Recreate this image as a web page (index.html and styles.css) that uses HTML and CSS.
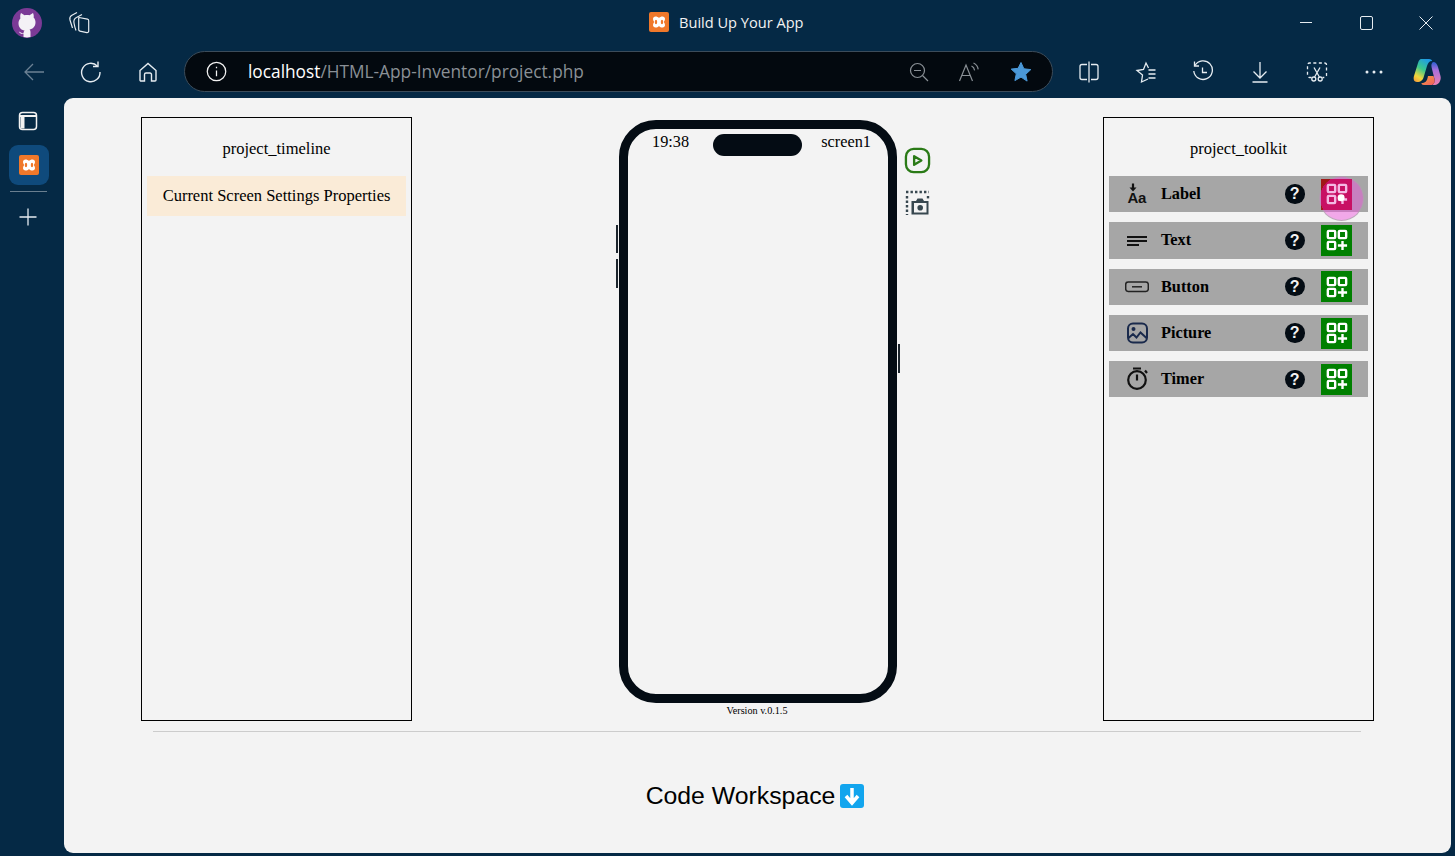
FILE: index.html
```html
<!DOCTYPE html>
<html lang="en">

<head>
    <meta charset="UTF-8" />
    <title>Build Up Your App</title>
    <link rel="stylesheet" href="styles.css">
</head>

<body>
    <header class="titlebar">
        <div class="title-left">
            <svg class="profile" viewBox="0 0 32 32" width="32" height="32">
                <circle cx="16" cy="16" r="15" fill="#7b3a96" />
                <path d="M10 6l3.5 2.2c1.6-.4 3.400-.4 5 0L22 6c.8 1.800.9 3.300.6 4.500 1.300 1.400 1.900 3 1.900 4.800 0 4.500-2.700 6.700-6 7.200.8.700 1 1.600 1 2.800V30a15 15 0 0 1-7 0v-3.200c-2.500.5-3.800-.6-4.700-2.300 1 .2 2 1 3 1.500.6.300 1.200.2 1.700 0 0-1 .3-1.800 1-2.500-3.300-.5-6-2.700-6-7.200 0-1.800.6-3.400 1.900-4.800C9.100 9.300 9.200 7.800 10 6z" fill="#f4f1f6" />
            </svg>
            <svg class="tool-icon" viewBox="0 0 24 24" width="24" height="24" fill="none" stroke="#e6ecf1" stroke-width="1.200">
                <path d="M12 6.500l8.500 1.700a1.500 1.500 0 0 1 1.200 1.500v10.500a1.500 1.500 0 0 1-1.800 1.400l-7-1.500a1.500 1.500 0 0 1-1.200-1.500V8a1.500 1.500 0 0 1 .3-1.500z" />
                <path d="M9 19.500C8 17 7.500 15 7 12c-.5-2.500.5-4.500 2.500-5.500L15 3.500" />
                <path d="M5.500 17L3 9c-.5-2 0-3.500 1.500-4.500L10 1.500" />
            </svg>
        </div>
        <div class="window-title">
            <svg class="xampp" viewBox="0 0 20 20" width="20" height="20">
                <rect width="20" height="20" rx="2" fill="#f0782a" />
                <path d="M4 7c0-1.500 1-2.500 2.500-2.500 1.500 0 2.500.5 3.500 1.500 1-1 2-1.500 3.500-1.500C15 4.500 16 5.500 16 7c0 1-.5 2-1.200 3 .7 1 1.200 2 1.200 3 0 1.500-1 2.500-2.500 2.500-1.500 0-2.500-.5-3.500-1.500-1 1-2 1.500-3.500 1.500C5 15.500 4 14.500 4 13c0-1 .5-2 1.200-3C4.500 9 4 8 4 7z" fill="#fff" />
                <ellipse cx="7" cy="10" rx="1.200" ry="2.300" fill="#f0782a" />
                <ellipse cx="13" cy="10" rx="1.200" ry="2.300" fill="#f0782a" />
            </svg>
            <span>Build Up Your App</span>
        </div>
        <div class="window-buttons">
            <svg viewBox="0 0 16 16" width="16" height="16" stroke="#e6ecf1" fill="none"><path d="M2 7.500h12" /></svg>
            <svg viewBox="0 0 16 16" width="16" height="16" stroke="#e6ecf1" fill="none"><rect x="2.500" y="1.500" width="12" height="13" rx="1.500" /></svg>
            <svg viewBox="0 0 16 16" width="16" height="16" stroke="#e6ecf1" fill="none"><path d="M1.500 1.500l13 13M14.500 1.500l-13 13" /></svg>
        </div>
    </header>

    <nav class="toolbar">
        <div class="nav-icons">
            <svg viewBox="0 0 24 24" width="24" height="24" fill="none" stroke="#6c8194" stroke-width="1.300"><path d="M22 12H3M11 4l-8 8 8 8" /></svg>
            <svg viewBox="0 0 24 24" width="24" height="24" fill="none" stroke="#e6ecf1" stroke-width="1.400"><path d="M18.500 6.200A9.200 9.200 0 1 0 21 12" /><path d="M19 1.500v5h-5" /></svg>
            <svg viewBox="0 0 24 24" width="24" height="24" fill="none" stroke="#e6ecf1" stroke-width="1.400"><path d="M4 10.500L12 3.500l8 7V20a1 1 0 0 1-1 1h-3.500v-6.500a1.500 1.500 0 0 0-1.500-1.500h-4a1.500 1.500 0 0 0-1.500 1.500V21H5a1 1 0 0 1-1-1z" /></svg>
        </div>
        <div class="address-bar">
            <svg class="info" viewBox="0 0 20 20" width="21" height="21" fill="none" stroke="#f2f2f2" stroke-width="1.200"><circle cx="10" cy="10" r="8.800" /><path d="M10 9v5.500M10 5.500v1.400" /></svg>
            <div class="url"><span class="host">localhost</span>/HTML-App-Inventor/project.php</div>
            <div class="address-actions">
                <svg viewBox="0 0 20 20" width="20" height="20" fill="none" stroke="#8a9096" stroke-width="1.200"><circle cx="8.500" cy="8.500" r="7" /><path d="M5 8.500h7M13.500 13.500l5.500 5.500" /></svg>
                <svg viewBox="0 0 22 20" width="22" height="20" fill="none" stroke="#8a9096" stroke-width="1.200"><path d="M1.500 19L8 3l6.500 16M4 13.500h8" /><path d="M13.500 4c1.800.8 2.800 2.300 3.100 4.300M15.500 1c2.800 1.200 4.300 3.400 4.700 6.400" /></svg>
                <svg viewBox="0 0 24 24" width="24" height="24"><path d="M12 2.500l2.900 6.300 6.900.8-5.100 4.700 1.400 6.800L12 17.100 5.900 20.600l1.400-6.800-5.100-4.700 6.900-.8z" fill="#4a98d8" stroke="#4a98d8" stroke-linejoin="round" /></svg>
            </div>
        </div>
        <div class="browser-icons">
            <svg viewBox="0 0 24 24" width="24" height="24" fill="none" stroke="#e6ecf1" stroke-width="1.300"><path d="M10 4.500H5a2 2 0 0 0-2 2v11a2 2 0 0 0 2 2h5M14 4.500h5a2 2 0 0 1 2 2v11a2 2 0 0 1-2 2h-5M12 1.500v21" /></svg>
            <svg viewBox="0 0 24 24" width="24" height="24" fill="none" stroke="#e6ecf1" stroke-width="1.300"><path d="M14 19l-6.500 3 1-7L3 10.500 9.500 9.500 12 3l2.500 5" /><path d="M14.500 10h7M14.500 14h7M14.500 18h7" /></svg>
            <svg class="history" viewBox="0 0 24 24" width="24" height="24" fill="none" stroke="#e6ecf1" stroke-width="1.300"><path d="M4 5.500A9.300 9.300 0 1 1 2.800 11" /><path d="M3.500 1.500v4.500h4.500M11.500 7.500v5h4.500" /></svg>
            <svg viewBox="0 0 24 24" width="24" height="24" fill="none" stroke="#e6ecf1" stroke-width="1.300"><path d="M12 2v16M5.500 11.500L12 18l6.500-6.500M4.500 22h15" /></svg>
            <svg viewBox="0 0 24 24" width="24" height="24" fill="none" stroke="#e6ecf1" stroke-width="1.300"><path d="M6.500 17.500H4.500a2 2 0 0 1-2-2V5a2 2 0 0 1 2-2h15a2 2 0 0 1 2 2v10.500a2 2 0 0 1-2 2h-2" stroke-dasharray="3 2.500" /><path d="M9 7.500l5.400 9.500M15 7.500l-5.400 9.500" /><circle cx="8.800" cy="19" r="2" /><circle cx="15.200" cy="19" r="2" /></svg>
            <svg viewBox="0 0 24 24" width="24" height="24" fill="#e6ecf1"><circle cx="5" cy="12" r="1.500" /><circle cx="12" cy="12" r="1.500" /><circle cx="19" cy="12" r="1.500" /></svg>
            <svg class="copilot" viewBox="0 0 28 28" width="28" height="28">
                <defs>
                    <linearGradient id="cop-a" x1="0.700" y1="0" x2="0.200" y2="1"><stop offset="0" stop-color="#1f9be6" /><stop offset="0.450" stop-color="#3cc98c" /><stop offset="0.800" stop-color="#f3d63c" /><stop offset="1" stop-color="#f5a63a" /></linearGradient>
                    <linearGradient id="cop-b" x1="0.500" y1="0" x2="0.500" y2="1"><stop offset="0" stop-color="#2b5fd0" /><stop offset="0.350" stop-color="#a96fdc" /><stop offset="1" stop-color="#ee7fb0" /></linearGradient>
                    <linearGradient id="cop-c" x1="0" y1="0" x2="1" y2="1"><stop offset="0" stop-color="#f7a33c" /><stop offset="1" stop-color="#ee5a62" /></linearGradient>
                </defs>
                <path d="M8 1h8c2 0 3 1 3 2-3 0-4 2-5 5l-3 10c-1 4-3 6-7 6-3 0-4-3-3-6L5 5c1-3 2-4 3-4z" fill="url(#cop-a)" />
                <path d="M20 4c3 0 4 2 5 5l2.500 9c1 4-1.500 9-5.500 9h-4c3 0 4-3 3.500-6L19 11c-.5-2-1.500-5 1-7z" fill="url(#cop-b)" />
                <path d="M15 18h5.500l1 3.500c.7 3-1 5.500-3.500 5.500h-7c-2 0-2.500-1-2.500-2 3.500 0 5.500-1 6.500-7z" fill="url(#cop-c)" />
            </svg>
        </div>
    </nav>

    <div class="browser-body">
        <aside class="sidebar">
            <svg class="side-icon" viewBox="0 0 20 20" width="20" height="20" fill="none" stroke="#f2f2f2" stroke-width="1.500"><rect x="1.500" y="1.500" width="17" height="17" rx="3" /><path d="M2 5h16" stroke-width="2" /><path d="M2.500 5.500h4v12h-4z" fill="#f2f2f2" stroke="none" /></svg>
            <div class="active-tab">
                <svg viewBox="0 0 20 20" width="20" height="20">
                    <rect width="20" height="20" rx="2" fill="#f0782a" />
                    <path d="M4 7c0-1.500 1-2.500 2.500-2.500 1.500 0 2.500.5 3.500 1.500 1-1 2-1.500 3.500-1.500C15 4.500 16 5.500 16 7c0 1-.5 2-1.200 3 .7 1 1.200 2 1.200 3 0 1.500-1 2.500-2.500 2.500-1.500 0-2.500-.5-3.500-1.500-1 1-2 1.500-3.500 1.500C5 15.500 4 14.500 4 13c0-1 .5-2 1.200-3C4.500 9 4 8 4 7z" fill="#fff" />
                    <ellipse cx="7" cy="10" rx="1.200" ry="2.300" fill="#f0782a" />
                    <ellipse cx="13" cy="10" rx="1.200" ry="2.300" fill="#f0782a" />
                </svg>
            </div>
            <div class="side-rule"></div>
            <svg class="side-icon" viewBox="0 0 20 20" width="20" height="20" fill="none" stroke="#e6ecf1" stroke-width="1.300"><path d="M10 1.500v17M1.500 10h17" /></svg>
        </aside>

        <main class="page">
            <div class="workspace">
                <section class="panel">
                    <h2 class="panel-title">project_timeline</h2>
                    <div class="timeline-item">Current Screen Settings Properties</div>
                </section>

                <section class="phone-col">
                    <div class="phone-wrap">
                        <div class="phone">
                            <div class="status-bar">
                                <span>19:38</span>
                                <span>screen1</span>
                            </div>
                            <div class="notch"></div>
                            <i class="side-btn vol-up"></i>
                            <i class="side-btn vol-down"></i>
                            <i class="side-btn power"></i>
                        </div>
                        <div class="phone-tools">
                            <svg viewBox="0 0 28 28" width="27" height="27" fill="none" stroke="#2a7a16" stroke-width="2.400"><rect x="2" y="2" width="24" height="24" rx="8" /><path d="M10.500 9.500l7.500 4.500-7.500 4.500z" stroke-linejoin="round" /></svg>
                            <svg viewBox="0 0 26 26" width="26" height="26" fill="none" stroke="#37474f" stroke-width="2.400"><path d="M2 2H25" stroke-dasharray="2.400 2.100" /><path d="M3 6V25" stroke-dasharray="2.400 2.100" /><path d="M24 6v2.400" /><path d="M7.500 11H12l1.500-2.500h5L20 11h4.500v13.500H7.500z" fill="#37474f" stroke="none" /><rect x="10" y="13" width="12.500" height="9.500" fill="#f3f3f3" stroke="none" /><circle cx="16.200" cy="17.700" r="2.800" fill="#37474f" stroke="none" /></svg>
                        </div>
                    </div>
                    <div class="version">Version v.0.1.5</div>
                </section>

                <section class="panel">
                    <h2 class="panel-title">project_toolkit</h2>
                    <div class="tool-row">
                        <svg class="kit-icon" viewBox="0 0 24 24" width="24" height="24"><path d="M8 1.500v5" fill="none" stroke="#111" stroke-width="2.200" /><path d="M4.500 5.500h7L8 9.500z" fill="#111" /><text x="2.500" y="21" class="kit-big">A</text><text x="13" y="21" class="kit-small">a</text></svg>
                        <span class="tool-name">Label</span>
                        <span class="help">?</span>
                        <div class="add-wrap">
                            <i class="click-ring"></i>
                            <span class="add-btn add-hover"><svg viewBox="0 0 24 24" width="22" height="22" fill="none" stroke="#f4b8e4" stroke-width="2.600"><rect x="2" y="2" width="8" height="8" rx="1" /><rect x="14" y="2" width="8" height="8" rx="1" /><rect x="2" y="14" width="8" height="8" rx="1" /><path d="M18 13v10M13 18h10" /><circle cx="16.500" cy="16" r="3.800" fill="#fff" stroke="none" /></svg></span>
                        </div>
                    </div>
                    <div class="tool-row">
                        <svg class="kit-icon" viewBox="0 0 24 24" width="24" height="24" fill="none" stroke="#111" stroke-width="2.200"><path d="M2 9h20M2 13h20M2 17h12" /></svg>
                        <span class="tool-name">Text</span>
                        <span class="help">?</span>
                        <div class="add-wrap">
                            <span class="add-btn"><svg viewBox="0 0 24 24" width="22" height="22" fill="none" stroke="#fff" stroke-width="2.600"><rect x="2" y="2" width="8" height="8" rx="1" /><rect x="14" y="2" width="8" height="8" rx="1" /><rect x="2" y="14" width="8" height="8" rx="1" /><path d="M18 13v10M13 18h10" /></svg></span>
                        </div>
                    </div>
                    <div class="tool-row">
                        <svg class="kit-icon" viewBox="0 0 24 24" width="24" height="24" fill="none" stroke="#222" stroke-width="1.500"><rect x="0.700" y="7" width="22.600" height="9.500" rx="2.500" /><path d="M7 11.800h10" /></svg>
                        <span class="tool-name">Button</span>
                        <span class="help">?</span>
                        <div class="add-wrap">
                            <span class="add-btn"><svg viewBox="0 0 24 24" width="22" height="22" fill="none" stroke="#fff" stroke-width="2.600"><rect x="2" y="2" width="8" height="8" rx="1" /><rect x="14" y="2" width="8" height="8" rx="1" /><rect x="2" y="14" width="8" height="8" rx="1" /><path d="M18 13v10M13 18h10" /></svg></span>
                        </div>
                    </div>
                    <div class="tool-row">
                        <svg class="kit-icon" viewBox="0 0 24 24" width="24" height="24" fill="none" stroke="#1a2a4c" stroke-width="2"><rect x="3" y="2.500" width="19" height="19" rx="5" /><circle cx="8.500" cy="8" r="1" fill="#1a2a4c" /><path d="M3.500 17l4.500-4 3.500 3.500 4-5 6 5.500" /></svg>
                        <span class="tool-name">Picture</span>
                        <span class="help">?</span>
                        <div class="add-wrap">
                            <span class="add-btn"><svg viewBox="0 0 24 24" width="22" height="22" fill="none" stroke="#fff" stroke-width="2.600"><rect x="2" y="2" width="8" height="8" rx="1" /><rect x="14" y="2" width="8" height="8" rx="1" /><rect x="2" y="14" width="8" height="8" rx="1" /><path d="M18 13v10M13 18h10" /></svg></span>
                        </div>
                    </div>
                    <div class="tool-row">
                        <svg class="kit-icon" viewBox="0 0 24 24" width="24" height="24" fill="none" stroke="#111" stroke-width="2.200"><circle cx="12" cy="13" r="8.800" /><path d="M8 1.500h8M12 7.500v6M20 3.500l2 2.500" /></svg>
                        <span class="tool-name">Timer</span>
                        <span class="help">?</span>
                        <div class="add-wrap">
                            <span class="add-btn"><svg viewBox="0 0 24 24" width="22" height="22" fill="none" stroke="#fff" stroke-width="2.600"><rect x="2" y="2" width="8" height="8" rx="1" /><rect x="14" y="2" width="8" height="8" rx="1" /><rect x="2" y="14" width="8" height="8" rx="1" /><path d="M18 13v10M13 18h10" /></svg></span>
                        </div>
                    </div>
                </section>
            </div>

            <hr class="divider" />

            <h1 class="code-title">Code Workspace<span class="down-emoji"><svg viewBox="0 0 24 24" width="24" height="24"><rect width="24" height="24" rx="3" fill="#12a5ee" /><path d="M12 4v14M6 12l6 7 6-7" fill="none" stroke="#fff" stroke-width="3.500" /></svg></span></h1>
        </main>
    </div>
</body>

</html>
```

FILE: styles.css
```css
* {
    box-sizing: border-box;
}

html,
body {
    height: 100%;
}

body {
    margin: 0;
    background: #052945;
    overflow: hidden;
    display: flex;
    flex-direction: column;
    font-family: "Liberation Serif", serif;
    color: #000;
}

svg {
    display: block;
    flex: none;
}

/* browser frame */

.titlebar {
    height: 45px;
    display: flex;
    align-items: center;
    justify-content: space-between;
    position: relative;
}

.title-left {
    display: flex;
    align-items: center;
    gap: 24px;
    padding-left: 11px;
}

.window-title {
    position: absolute;
    left: 649px;
    top: 12px;
    display: flex;
    align-items: center;
    gap: 10px;
    color: #f2f2f2;
    font-family: "Open Sans", sans-serif;
    font-size: 14.600px;
}

.window-buttons {
    display: flex;
    gap: 44px;
    padding-right: 21px;
}

.toolbar {
    height: 53px;
    display: flex;
    align-items: center;
}

.nav-icons {
    display: flex;
    gap: 33px;
    padding-left: 22px;
    width: 184px;
}

.address-bar {
    width: 869px;
    height: 41px;
    border: 1px solid #3c4c5a;
    border-radius: 21px;
    background: #03090f;
    display: flex;
    align-items: center;
    padding: 0 19px 0 21px;
}

.url {
    margin-left: 21px;
    flex: 1;
    color: #8a9096;
    font-family: "Open Sans", sans-serif;
    font-size: 17.300px;
}

.host {
    color: #fff;
}

.address-actions {
    display: flex;
    align-items: center;
    gap: 29px;
}

.browser-icons {
    display: flex;
    align-items: center;
    gap: 33px;
    padding-left: 24px;
}

.copilot {
    margin-left: -6px;
}

.browser-body {
    flex: 1;
    display: flex;
    padding: 0 4px 3px 0;
    min-height: 0;
}

.sidebar {
    width: 64px;
    flex: none;
    display: flex;
    flex-direction: column;
    align-items: center;
    padding-top: 13px;
    padding-right: 7px;
}

.side-icon {
    margin-left: -2px;
}

.active-tab {
    width: 40px;
    height: 40px;
    margin-top: 14px;
    border-radius: 9px;
    background: #0f4a7c;
    display: flex;
    align-items: center;
    justify-content: center;
}

.side-rule {
    width: 37px;
    height: 1px;
    background: #6a7f90;
    margin: 6px 0 15px;
}

/* page */

.page {
    flex: 1;
    background: #f3f3f3;
    border-radius: 9px;
    padding: 19px 77px 0;
    min-width: 0;
}

.workspace {
    display: flex;
    justify-content: space-between;
    height: 604px;
}

.panel {
    width: 271px;
    height: 604px;
    border: 1px solid #000;
    padding: 0 5px;
}

.panel-title {
    margin: 0;
    padding-top: 21px;
    height: 58px;
    font-size: 16.500px;
    font-weight: 400;
    line-height: 20px;
    text-align: center;
}

.timeline-item {
    height: 40px;
    background: #faebd7;
    font-size: 16.500px;
    line-height: 40px;
    text-align: center;
}

.phone-col {
    width: 278px;
    margin-left: 207px;
    margin-right: 206px;
    padding-top: 3px;
    flex: none;
}

.phone-wrap {
    position: relative;
}

.phone {
    position: relative;
    width: 278px;
    height: 583px;
    border: 9px solid #040c14;
    border-radius: 37px;
}

.status-bar {
    display: flex;
    justify-content: space-between;
    padding: 4px 17px 0 24px;
    font-size: 16.300px;
    line-height: 18px;
}

.notch {
    position: absolute;
    top: 5px;
    left: 85px;
    width: 89px;
    height: 22px;
    border-radius: 11px;
    background: #040c14;
}

.side-btn {
    position: absolute;
    width: 2px;
    background: #1c252d;
}

.vol-up {
    left: -12px;
    top: 96px;
    height: 28px;
}

.vol-down {
    left: -12px;
    top: 130px;
    height: 29px;
}

.power {
    right: -12px;
    top: 215px;
    height: 29px;
}

.phone-tools {
    position: absolute;
    left: 285px;
    top: 27px;
    display: flex;
    flex-direction: column;
    gap: 16px;
}

.version {
    padding-right: 2px;
    text-align: center;
    font-size: 10.200px;
    line-height: 14px;
    margin-top: 1px;
}

/* toolkit rows */

.tool-row {
    height: 36.300px;
    margin-bottom: 10px;
    background: #a6a6a6;
    display: flex;
    align-items: center;
    padding-left: 16px;
}

.kit-icon {
    width: 24px;
    height: 24px;
}

.kit-big,
.kit-small {
    font-family: "Liberation Sans", sans-serif;
    font-weight: 700;
    fill: #111;
}

.kit-big {
    font-size: 15px;
}

.kit-small {
    font-size: 15px;
}

.tool-name {
    margin-left: 12px;
    width: 124px;
    font-size: 16.300px;
    font-weight: 700;
}

.help {
    width: 19.500px;
    height: 19.500px;
    border-radius: 50%;
    background: #040c14;
    color: #f3f3f3;
    font-family: "Liberation Sans", sans-serif;
    font-size: 16px;
    font-weight: 700;
    line-height: 19.500px;
    text-align: center;
}

.add-wrap {
    position: relative;
    margin-left: 16.500px;
}

.add-btn {
    position: relative;
    width: 31px;
    height: 31px;
    background: #008000;
    display: flex;
    align-items: center;
    justify-content: center;
}

.add-hover {
    background: radial-gradient(circle 22px at 21px 19px, #c80f64 99%, #a01818 100%);
}

.click-ring {
    position: absolute;
    left: -2px;
    top: -3px;
    width: 45px;
    height: 45px;
    border-radius: 50%;
    background: rgba(238, 83, 221, 0.47);
    border: 1px solid rgba(170, 170, 170, 0.7);
}

/* bottom */

.divider {
    margin: 10px 13px 0 12px;
    border: none;
    border-top: 1px solid #ccc;
}

.code-title {
    margin: 50px 0 0;
    padding-right: 5px;
    display: flex;
    justify-content: center;
    align-items: center;
    gap: 5px;
    font-family: "Liberation Sans", sans-serif;
    font-size: 24.800px;
    font-weight: 400;
    line-height: 28px;
}

.down-emoji {
    display: block;
}
```
